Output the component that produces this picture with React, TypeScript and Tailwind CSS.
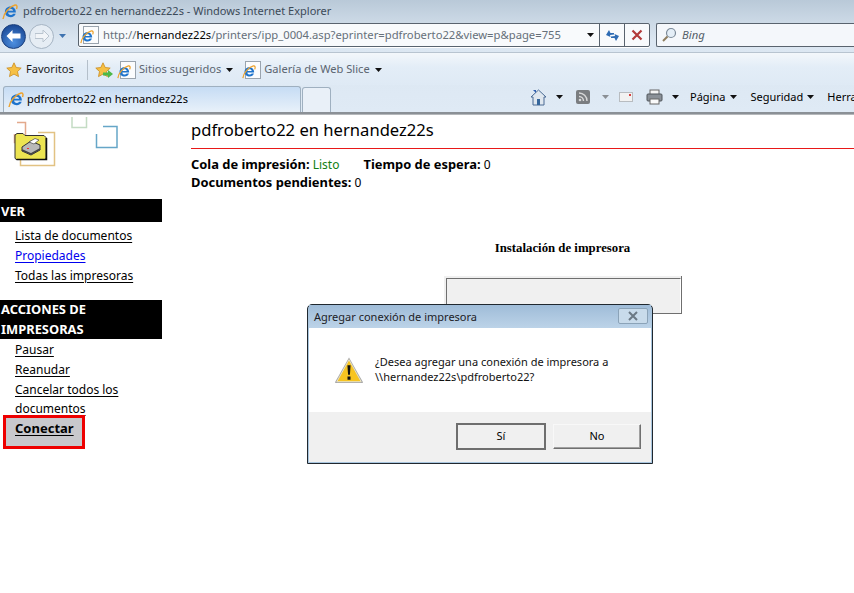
import type { ReactNode } from "react";

const uiFont = "font-['Noto_Sans','Open_Sans',sans-serif]";

const IeIcon = ({ size = 16 }: { size?: number }) => (
  <svg width={size} height={size} viewBox="0 0 16 16" className="shrink-0">
    <path
      d="M8.300 2.600c3.400 0 5.600 2.500 5.600 5.900H6.100c.1 1.500 1.200 2.400 2.700 2.400 1 0 1.800-.4 2.300-1.200h2.600c-.8 2.200-2.700 3.500-5 3.500-3.300 0-5.800-2.200-5.800-5.200 0-3.100 2.500-5.400 5.400-5.400zM6.200 6.800h4.900c-.2-1.300-1.200-2-2.400-2s-2.300.7-2.500 2z"
      fill="#1f74cc"
      fillRule="evenodd"
    />
    <path d="M1 15C1.500 9.500 7.500 2.500 13 1c2-.3 2.500 1.500 1.500 4" fill="none" stroke="#eda32e" strokeWidth="1.400" />
  </svg>
);

const PageIe = () => (
  <span className="relative block h-[18px] w-[16px] shrink-0 border border-[#9aa4ae] bg-[#fbfcfd]">
    <span className="absolute -bottom-px -left-1">
      <IeIcon size={14} />
    </span>
  </span>
);

const Caret = ({ color = "#111" }: { color?: string }) => (
  <svg width="7" height="4" viewBox="0 0 7 4" className="shrink-0">
    <path d="M0 0h7L3.500 4z" fill={color} />
  </svg>
);

const Star = ({ size = 16 }: { size?: number }) => (
  <svg width={size} height={size} viewBox="0 0 16 16" className="shrink-0">
    <path
      d="M8 .8l2.200 4.700 5 .6-3.700 3.400 1 5.100L8 12.100l-4.500 2.500 1-5.100L.8 6.100l5-.6z"
      fill="#f6c044"
      stroke="#c98a1e"
      strokeWidth=".8"
    />
  </svg>
);

const SideLink = ({ children, blue }: { children: ReactNode; blue?: boolean }) => (
  <a className={`block underline underline-offset-2 ${blue ? "text-[#0000ee]" : "text-black"}`}>{children}</a>
);

const SideHeading = ({ children }: { children: ReactNode }) => (
  <div className="bg-black pl-px text-[12.900px] leading-[19.500px] font-bold text-white">{children}</div>
);

const Logo = () => (
  <svg width="162" height="84" viewBox="0 0 162 84" className="block">
    <g fill="none" strokeWidth="1.500">
      <path d="M17 7.500h8.500v20H14.500V19" stroke="#e3a98c" />
      <path d="M38 17.500h16.500v33H20.500V40" stroke="#e2c283" />
      <path d="M72 2v10.500h14.500V2" stroke="#c4dcc4" />
      <path d="M103 11.500h14v21H96.500V19" stroke="#66a6c8" />
    </g>
    <path d="M15 22v-2l2-1.500h6l2 2h19l2 2V43l-1 1.500H16l-1-1.500z" fill="#ece451" stroke="#333" strokeWidth="1" />
    <path d="M46.500 23v21.500h-30" fill="none" stroke="#111" strokeWidth="1.500" />
    <path d="M22 32l9-6 9 4v5l-9 5-9-4z" fill="#b9b9b9" stroke="#333" strokeWidth="1" />
    <path d="M29 27l6-3.500 4 1.500-5 4z" fill="#fff" stroke="#444" strokeWidth=".7" />
    <path d="M22 35l9 4 9-5" fill="none" stroke="#444" strokeWidth="1.500" />
    <rect x="27" y="33" width="2" height="1" fill="#e33" />
  </svg>
);

const Warning = () => (
  <svg width="30" height="28" viewBox="0 0 32 30" className="shrink-0">
    <path d="M16 1.500L31 28a1 1 0 0 1-.8 1H1.800a1 1 0 0 1-.8-1z" fill="#a9a9a9" />
    <path d="M16 4l13 23.500H3z" fill="#f7c421" stroke="#e8e3c8" strokeWidth="1" />
    <path d="M14.300 10h3.400l-.7 10h-2zM14.400 22h3.200v3.400h-3.200z" fill="#111" />
  </svg>
);

const DialogButton = ({ children, focused }: { children: ReactNode; focused?: boolean }) => (
  <div
    className={`flex h-[25px] w-[88px] items-center justify-center border border-[#f8f8f8] border-r-[#707070] border-b-[#707070] bg-[#f0f0f0] text-[11px] text-black ${
      focused ? "outline-2 -outline-offset-1 outline-[#6e6e6e]" : "shadow-[inset_-1px_-1px_0_#a0a0a0]"
    }`}
  >
    {children}
  </div>
);

export default function App() {
  return (
    <div className={`relative h-[593px] w-[854px] overflow-hidden bg-white ${uiFont}`}>
      {/* Browser chrome */}
      <div className="bg-[linear-gradient(#b9c9d8,#dbe6f1_40px,#dfeaf5)]">
        <div className="flex h-[23px] items-center gap-[5px] pl-[2px] text-[11px] text-[#3c4a58]">
          <IeIcon size={16} />
          <span className="whitespace-nowrap">pdfroberto22 en hernandez22s - Windows Internet Explorer</span>
        </div>

        <div className="flex h-[30px] items-start border-b border-[#b8c4d0]">
          <div className="flex h-[26px] w-[78px] items-center pl-[1px]">
            <div className="flex h-[25px] w-[25px] items-center justify-center rounded-full border border-[#1b3f7c] bg-[radial-gradient(circle_at_50%_75%,#4d8fe0,#103a86)]">
              <svg width="15" height="12" viewBox="0 0 14 12">
                <path d="M6 0v3.500h8v5H6V12L0 6z" fill="#fff" />
              </svg>
            </div>
            <div className="ml-[3px] flex h-[25px] w-[25px] items-center justify-center rounded-full border border-[#a5b4c3] bg-[#e6edf4]">
              <svg width="14" height="12" viewBox="0 0 14 12">
                <path d="M8 0v3.500H0v5h8V12l6-6z" fill="#f2f5f8" stroke="#b9c4cf" />
              </svg>
            </div>
            <span className="ml-[5px]">
              <Caret color="#3f73b0" />
            </span>
          </div>
          <div className="flex h-[24px] w-[572px] items-center rounded-[2px] border border-[#59636e] bg-[#f8fafc] pl-[4px] shadow-[0_1px_0_#fff]">
            <PageIe />
            <span className="ml-[4px] pt-px text-[11.250px] whitespace-nowrap text-[#66707a]">
              http://<span className="text-black">hernandez22s</span>/printers/ipp_0004.asp?eprinter=pdfroberto22&amp;view=p&amp;page=755
            </span>
            <span className="mr-[5px] ml-auto">
              <Caret />
            </span>
            <div className="flex h-full w-[25px] items-center justify-center border-l border-[#59636e]">
              <svg width="15" height="13" viewBox="0 0 15 13">
                <path d="M1 6l3-5 1.500 3L9 4v1.500L5 6l.5 2zM14 7l-3 5-1.500-3L6 9V7.500L10 7 9.500 5z" fill="#2f6cb4" />
              </svg>
            </div>
            <div className="flex h-full w-[25px] items-center justify-center border-l border-[#59636e]">
              <svg width="12" height="12" viewBox="0 0 12 12">
                <path d="M1.500 1.500l9 9M10.500 1.500l-9 9" stroke="#b23a3a" strokeWidth="2.200" />
              </svg>
            </div>
          </div>
          <div className="ml-[6px] flex h-[24px] flex-1 items-center rounded-l-[2px] border border-r-0 border-[#59636e] bg-[#f4f7fb] pl-[4px]">
            <svg width="16" height="16" viewBox="0 0 16 16">
              <circle cx="10" cy="6" r="4.500" fill="#e4eef7" stroke="#7b8a99" strokeWidth="1.200" />
              <path d="M6.500 9.500L2 14" stroke="#8d7d5f" strokeWidth="2" />
            </svg>
            <span className="ml-[5px] pt-px text-[11.250px] text-[#555f6a] italic">Bing</span>
          </div>
        </div>

        <div className="flex h-[32px] items-center bg-[linear-gradient(#f3f7fb,#e3edf7_14px,#dfeaf5)] pt-px pl-[6px] text-[11.100px]">
          <Star />
          <span className="ml-[4px] w-[61px] text-[#1a1a1a]">Favoritos</span>
          <span className="h-[20px] w-px bg-[#b4bfca]" />
          <span className="relative ml-[7px]">
            <Star />
            <svg width="10" height="8" viewBox="0 0 10 8" className="absolute -right-[2px] bottom-0">
              <path d="M0 2.500h5V0l5 4-5 4V5.500H0z" fill="#4cb848" />
            </svg>
          </span>
          <span className="ml-[9px]">
            <PageIe />
          </span>
          <span className="ml-[3px] text-[#5b6570]">Sitios sugeridos</span>
          <span className="ml-[5px]">
            <Caret />
          </span>
          <span className="ml-[12px]">
            <PageIe />
          </span>
          <span className="ml-[3px] text-[#5b6570]">Galería de Web Slice</span>
          <span className="ml-[5px]">
            <Caret />
          </span>
        </div>

        <div className="flex h-[27px] items-end pl-[3px]">
          <div className="flex h-[26px] w-[298px] shrink-0 items-center gap-[3px] rounded-t-[3px] border border-b-0 border-[#9fb0c0] bg-[linear-gradient(#c6dcf4,#e8f1fa)] pl-[4px] text-[11px] text-black">
            <IeIcon size={16} />
            <span>pdfroberto22 en hernandez22s</span>
          </div>
          <div className="ml-px h-[25px] w-[29px] shrink-0 rounded-t-[3px] border border-b-0 border-[#9fb0c0] bg-[#e9f0f8]" />
          <div className="ml-[199px] flex h-[26px] flex-1 items-center pb-[4px] text-[11px] text-black">
            <svg width="17" height="17" viewBox="0 0 17 17" className="shrink-0">
              <path d="M8.500 1L16 8h-2v8H3V8H1z" fill="#dfe7ef" stroke="#4a6b94" />
              <rect x="7" y="10" width="3" height="6" fill="#36679c" />
              <path d="M3 1h3v3z" fill="#2f5fb0" />
            </svg>
            <span className="ml-[9px]">
              <Caret />
            </span>
            <span className="ml-[13px] flex h-[14px] w-[14px] items-center justify-center rounded-[2px] bg-[#7a7d80]">
              <svg width="10" height="10" viewBox="0 0 10 10">
                <circle cx="2" cy="8" r="1.300" fill="#d8d8d8" />
                <path d="M1 4.500A4.500 4.500 0 0 1 5.500 9M1 1a8 8 0 0 1 8 8" fill="none" stroke="#d8d8d8" strokeWidth="1.400" />
              </svg>
            </span>
            <span className="ml-[12px]">
              <Caret color="#8a8f94" />
            </span>
            <span className="relative ml-[10px] h-[10px] w-[14px] border border-[#b8bcc0] bg-[#f2f2f2]">
              <span className="absolute top-px right-px h-[2px] w-[2px] bg-[#d84040]" />
            </span>
            <svg width="17" height="16" viewBox="0 0 17 16" className="ml-[13px] shrink-0">
              <rect x="4" y="1" width="9" height="5" fill="#f4f4f4" stroke="#666" />
              <rect x="1" y="5" width="15" height="7" rx="1" fill="#8a9097" stroke="#50565c" />
              <rect x="4" y="10" width="9" height="5" fill="#fafafa" stroke="#666" />
            </svg>
            <span className="ml-[9px]">
              <Caret />
            </span>
            <span className="ml-[11px]">Página</span>
            <span className="ml-[5px]">
              <Caret />
            </span>
            <span className="ml-[13px]">Seguridad</span>
            <span className="ml-[4px]">
              <Caret />
            </span>
            <span className="ml-[13px] whitespace-nowrap">Herra</span>
          </div>
        </div>
      </div>
      <div className="h-[3px] border-t-2 border-b border-[#8b9096] border-b-[#b5b8bb]" />

      {/* Page */}
      <div className="flex text-[12px] leading-[20px] text-black">
        <div className="w-[162px] shrink-0">
          <Logo />
          <SideHeading>
            <div className="pt-[3px] pb-[0.500px]">VER</div>
          </SideHeading>
          <div className="flex flex-col pt-[4px] pl-[15px]">
            <SideLink>Lista de documentos</SideLink>
            <SideLink blue>Propiedades</SideLink>
            <SideLink>Todas las impresoras</SideLink>
          </div>
          <div className="mt-[14px]">
            <SideHeading>ACCIONES DE IMPRESORAS</SideHeading>
          </div>
          <div className="flex flex-col pt-px pl-[15px] leading-[19.800px]">
            <SideLink>Pausar</SideLink>
            <SideLink>Reanudar</SideLink>
            <SideLink>Cancelar todos los documentos</SideLink>
          </div>
          <div className="relative -mt-[4px] ml-[3px] h-[34px] w-[82px] border-[3px] border-[#ee0000] bg-[#c8c8cc] pl-[9px] text-[13px] font-bold">
            <a className="underline underline-offset-2">Conectar</a>
          </div>
        </div>

        <div className="min-w-0 flex-1 pl-[29px]">
          <div className="pt-[3px] pb-[6px] text-[16.600px] leading-[24px] whitespace-nowrap">pdfroberto22 en hernandez22s</div>
          <div className="h-px bg-[#e81818]" />
          <div className="mt-[7px] leading-[17.500px]">
            <div>
              <b className="text-[12.900px]">Cola de impresión:</b> <span className="text-[#118011]">Listo</span>
              <b className="ml-[24px] text-[12.900px]">Tiempo de espera:</b> 0
            </div>
            <div>
              <b className="text-[12.900px]">Documentos pendientes:</b> 0
            </div>
          </div>
          <div className="mt-[47px] flex flex-col items-center pl-[80px]">
            <div className="font-['Liberation_Serif',serif] text-[12.800px] font-bold">Instalación de impresora</div>
            <div className="mt-[18px] h-[38px] w-[238px] border-r border-b border-[#6f6f6f] bg-[#f0f0f0] pt-[2px] pl-[2px]">
              <div className="h-full border-t border-r border-l border-[#6f6f6f] border-r-white" />
            </div>
          </div>
        </div>
      </div>

      {/* Dialog */}
      <div className="absolute top-[304px] left-[307px] flex h-[160px] w-[346px] flex-col rounded-t-[5px] border border-[#20282f] bg-[#a9c6df] px-[1px] pb-[1px]">
        <div className="flex h-[23px] items-start justify-between bg-[linear-gradient(#9fbcd8,#bcd3e8)] pr-[3px] pl-[5px] text-[11px] text-[#1c2126]">
          <span className="leading-[24px]">Agregar conexión de impresora</span>
          <div className="mt-[3px] flex h-[16px] w-[30px] items-center justify-center rounded-[2px] border border-[#8ba3b8] bg-[#c8dbeb]">
            <svg width="12" height="10" viewBox="0 0 12 10">
              <path d="M2 1l8 8M10 1L2 9" stroke="#6b7985" strokeWidth="2" />
            </svg>
          </div>
        </div>
        <div className="flex h-[84px] items-start bg-white pt-[28px] pl-[25px] text-[11px] leading-[15px] text-[#111]">
          <Warning />
          <div className="-mt-[2px] ml-[11px]">
            ¿Desea agregar una conexión de impresora a
            <br />
            \\hernandez22s\pdfroberto22?
          </div>
        </div>
        <div className="flex flex-1 items-start justify-end gap-[8px] bg-[#f0f0f0] pt-[12px] pr-[10px]">
          <DialogButton focused>Sí</DialogButton>
          <DialogButton>No</DialogButton>
        </div>
      </div>
    </div>
  );
}
